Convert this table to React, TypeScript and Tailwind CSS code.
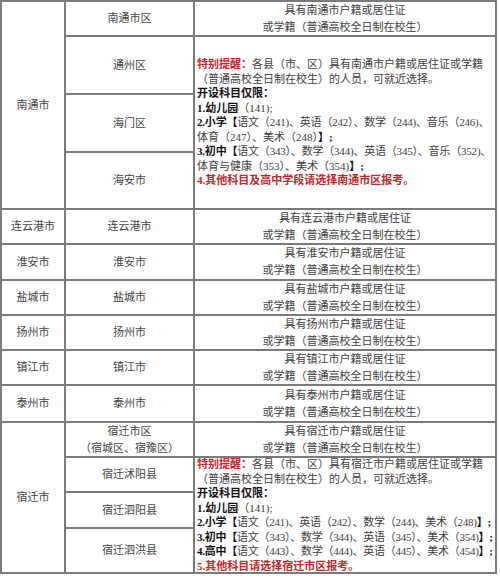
const cities = ["连云港市", "淮安市", "盐城市", "扬州市", "镇江市", "泰州市"];

const cell =
  "border-r-2 border-b-2 border-[#7a7a7a] flex flex-col items-center justify-center text-center";

const Req = ({ city }: { city: string }) => (
  <div className={`${cell} text-[11px] leading-[17px] text-[#3d3d3d]`}>
    <div>具有{city}户籍或居住证</div>
    <div>或学籍（普通高校全日制在校生）</div>
  </div>
);

const Red = ({ children }: { children: React.ReactNode }) => (
  <span className="font-bold text-[#c4262e]">{children}</span>
);

const B = ({ children }: { children: React.ReactNode }) => (
  <span className="font-bold text-[#111]">{children}</span>
);

const Notice = ({ city, rows }: { city: string; rows: React.ReactNode[] }) => (
  <div className="row-span-3 border-r-2 border-b-2 border-[#7a7a7a] flex flex-col justify-center pl-[2px] text-[11px] leading-[14.5px] text-[#3d3d3d] whitespace-nowrap">
    <div>
      <Red>特别提醒：</Red>各县（市、区）具有{city}户籍或居住证或学籍
    </div>
    <div>（普通高校全日制在校生）的人员，可就近选择。</div>
    <div>
      <B>开设科目仅限：</B>
    </div>
    <div>
      <B>1.幼儿园</B>（141);
    </div>
    {rows}
  </div>
);

export default function App() {
  return (
    <div className="bg-white min-h-[587px] font-['Liberation_Serif','Noto_Sans_CJK_SC',serif]">
      <div className="grid w-fit grid-cols-[64px_129px_302px] grid-rows-[35px_58px_58px_57px_35px_36px_35px_35px_35px_37px_35px_35px_36px_45px] border-t-2 border-l-2 border-[#7a7a7a] text-[11px] text-[#444]">
        <div className={`${cell} row-span-4`}>南通市</div>
        <div className={cell}>南通市区</div>
        <Req city="南通市" />
        <div className={cell}>通州区</div>
        <Notice
          city="南通市"
          rows={[
            <div key="a" className="tracking-[-0.2px]">
              <B>2.小学【</B>语文（241)、英语（242）、数学（244)、音乐（246)、
            </div>,
            <div key="b">
              体育（247）、美术（248）<B>】;</B>
            </div>,
            <div key="c" className="tracking-[-0.2px]">
              <B>3.初中【</B>语文（343）、数学（344)、英语（345）、音乐（352)、
            </div>,
            <div key="d">
              体育与健康（353）、美术（354)<B>】;</B>
            </div>,
            <div key="e">
              <Red>4.其他科目及高中学段请选择南通市区报考。</Red>
            </div>,
          ]}
        />
        <div className={cell}>海门区</div>
        <div className={cell}>海安市</div>

        {cities.map((c) => (
          <div key={c} className="contents">
            <div className={cell}>{c}</div>
            <div className={cell}>{c}</div>
            <Req city={c} />
          </div>
        ))}

        <div className={`${cell} row-span-4`}>宿迁市</div>
        <div className={`${cell} leading-[17px]`}>
          <div>宿迁市区</div>
          <div>（宿城区、宿豫区）</div>
        </div>
        <Req city="宿迁市" />
        <div className={cell}>宿迁沭阳县</div>
        <Notice
          city="宿迁市"
          rows={[
            <div key="a" className="tracking-[-0.25px]">
              <B>2.小学【</B>语文（241)、英语（242）、数学（244)、美术（248)<B>】;</B>
            </div>,
            <div key="b" className="tracking-[-0.25px]">
              <B>3.初中【</B>语文（343）、数学（344)、英语（345）、美术（354)<B>】;</B>
            </div>,
            <div key="c" className="tracking-[-0.25px]">
              <B>4.高中【</B>语文（443）、数学（444)、英语（445）、美术（454)<B>】;</B>
            </div>,
            <div key="d">
              <Red>5.其他科目请选择宿迁市区报考。</Red>
            </div>,
          ]}
        />
        <div className={cell}>宿迁泗阳县</div>
        <div className={cell}>宿迁泗洪县</div>
      </div>
    </div>
  );
}
